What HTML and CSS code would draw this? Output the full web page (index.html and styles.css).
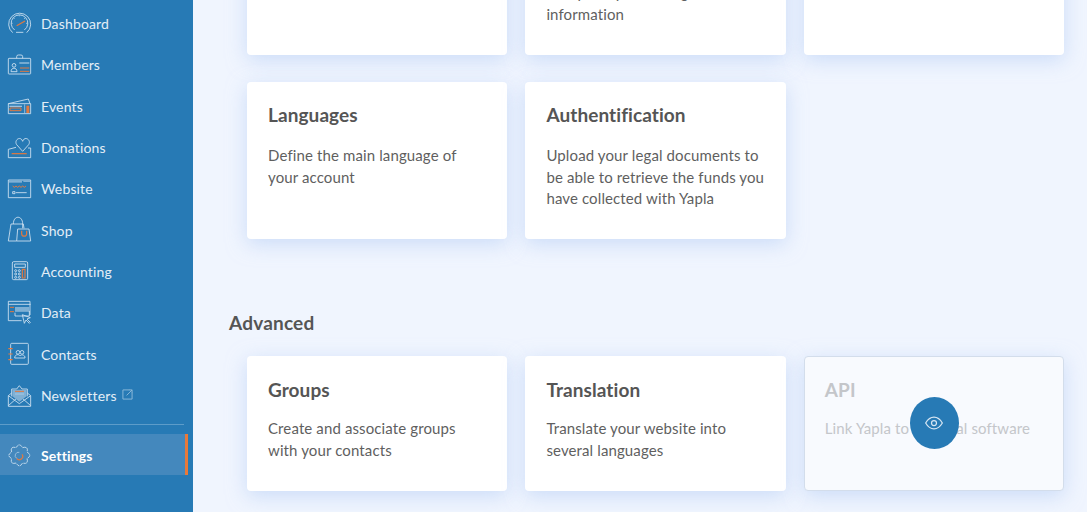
FILE: index.html
```html
<!DOCTYPE html>
<html lang="en">
<head>
<meta charset="utf-8">
<title>Settings</title>
<link rel="stylesheet" href="styles.css">
</head>
<body>
<div class="app">
  <nav class="sidebar">
    <a class="nav-item"><svg class="ico" viewBox="24 38 69 69"><path class="w" d="M38 100A33 33 0 1 1 80 100M44 92A25 25 0 1 1 73 92M48 99H70"/><path class="t" d="M58 46v5M40 55l4 4M76 55l-4 4M33 72h5M83 72h-5"/><path class="o th" d="M50 79L75 65"/></svg><span>Dashboard</span></a>
    <a class="nav-item"><svg class="ico" viewBox="24 160 69 69"><path class="w" d="M27 176H90a2 2 0 0 1 2 2V221a2 2 0 0 1-2 2H27a2 2 0 0 1-2-2V178a2 2 0 0 1 2-2zM50 176v-5q0-5 5-5h8q5 0 5 5v5"/><circle class="w" cx="42" cy="197" r="5.500"/><path class="w" d="M33 216c0-14 18-14 18 0z"/><path class="l" d="M58 190H88"/><path class="o" d="M60 205H88M60 215H88"/></svg><span>Members</span></a>
    <a class="nav-item"><svg class="ico" viewBox="24 284 69 69"><path class="w" d="M25 310H92V340H25zM25 310L85 296L90 310"/><path class="t" d="M74 312V340"/><path class="l" d="M28 318H66"/><path class="o" d="M30 323H63V331H30z"/><path class="fo" d="M79 316H88V338H79z"/></svg><span>Events</span></a>
    <a class="nav-item"><svg class="ico" viewBox="24 410 69 69"><path class="w" d="M68 456L50 436C41 422 62 408 68 426C74 408 95 422 86 436zM48 444L25 450V475H92V446H84"/><path class="o th" d="M35 463H80"/></svg><span>Donations</span></a>
    <a class="nav-item"><svg class="ico" viewBox="24 23 69 69"><path class="w" d="M25 32H92V85H25z"/><path class="fl" d="M27 33H66V40H27z"/><path class="t" d="M70 36H90"/><path class="o" d="M38 50l5 4 5-4 5 4 5-4 5 4 5-4 5 4 5-4"/><path class="w" d="M38 67H45V73H38zM48 70H80"/></svg><span>Website</span></a>
    <a class="nav-item"><svg class="ico" viewBox="24 150 69 69"><path class="w" d="M25 216L33 165H70L72 178M25 216H50M40 165C40 138 68 138 68 165V178M53 180H87L92 216H50z"/><path class="o th" d="M65 185V194C65 204 80 204 80 194V185"/></svg><span>Shop</span></a>
    <a class="nav-item"><svg class="ico" viewBox="24 273 69 69"><rect class="w" x="37" y="278" width="46" height="54" rx="4"/><path class="w" d="M44 285H76V295H44z"/><circle class="w" cx="47" cy="305" r="3"/><circle class="w" cx="58" cy="305" r="3"/><circle class="w" cx="47" cy="315" r="3"/><circle class="w" cx="58" cy="315" r="3"/><circle class="w" cx="47" cy="325" r="3"/><circle class="w" cx="58" cy="325" r="3"/><path class="o th" d="M67 301H75V327H67z"/></svg><span>Accounting</span></a>
    <a class="nav-item"><svg class="ico" viewBox="24 396 69 69"><path class="w" d="M90 438V397H25V455H65M25 406H92M45 426H88V441H45V431"/><path class="fl" d="M45 414H88V426H45z"/><path class="o" d="M30 415H42M30 428H42"/><path class="w" d="M67 437L73 463L78 453L88 463L91 460L81 450L91 446z"/></svg><span>Data</span></a>
    <a class="nav-item"><svg class="ico" viewBox="24 12 69 69"><rect class="w" x="32" y="13" width="53" height="63" rx="3"/><circle class="w" cx="54" cy="40" r="5.500"/><circle class="w" cx="66" cy="40" r="5.500"/><path class="w" d="M44 57c0-12 14-12 16-6c3-6 16-4 15 6z"/><path class="o th" d="M25 29H38M25 45H38M25 62H38"/></svg><span>Contacts</span></a>
    <a class="nav-item"><svg class="ico" viewBox="24 135 69 69"><path class="w" d="M25 170V202H92V170M25 200L50 178M92 200L67 178M25 170L58 194L92 170M25 170L35 162M92 170L82 162"/><path class="w" d="M35 172V150H50L58 140L66 150H82V172"/><path class="fl" d="M37 152H80V172L58 188L37 172z"/><path class="o" d="M45 157H72"/><path class="l" d="M45 165H72"/></svg><span>Newsletters</span><svg class="ext" viewBox="0 0 12 12"><path d="M8 1H1v10h10V4M5 7l6-6M7.500 1H11v3.500"/></svg></a>
    <hr class="sep">
    <a class="nav-item active"><svg class="ico" viewBox="24 315 69 69"><path class="w" stroke-dasharray="11 2" d="M48.400 325.900Q58 309 67.600 325.900Q86.300 320.700 81.100 339.400Q98 349 81.100 358.600Q86.300 377.300 67.600 372.100Q58 389 48.400 372.100Q29.700 377.300 34.900 358.600Q18 349 34.900 339.400Q29.700 320.700 48.400 325.900z"/><path class="o th" d="M66 346A10 10 0 0 1 50 358"/><path class="t" d="M50 358A10 10 0 0 1 58 340"/></svg><span>Settings</span></a>
  </nav>
  <main class="content">
    <section class="grid top">
      <article class="card"></article>
      <article class="card"><p class="cut">Complete your billing</p><p>information</p></article>
      <article class="card"></article>
      <article class="card"><h3>Languages</h3><p>Define the main language of your account</p></article>
      <article class="card"><h3>Authentification</h3><p>Upload your legal documents to be able to retrieve the funds you have collected with Yapla</p></article>
    </section>
    <h2>Advanced</h2>
    <section class="grid">
      <article class="card low"><h3>Groups</h3><p>Create and associate groups with your contacts</p></article>
      <article class="card low"><h3>Translation</h3><p>Translate your website into several languages</p></article>
      <article class="card low off"><h3>API</h3><p>Link Yapla to external software</p>
        <span class="eye"><svg viewBox="0 0 24 24"><path d="M2 12s4-7 10-7 10 7 10 7-4 7-10 7-10-7-10-7z"/><circle cx="12" cy="12" r="3"/></svg></span>
      </article>
    </section>
  </main>
</div>
</body>
</html>
```
FILE: styles.css
```css
* { box-sizing: border-box; }
html, body { margin: 0; height: 100%; overflow: hidden; }
body { font-family: "Lato", "Open Sans", sans-serif; color: #555; background: #f0f5fe; }
.app { display: flex; height: 512px; overflow: hidden; }
.sidebar { width: 193px; flex: none; background: #277ab5; padding-top: 3px; display: flex; flex-direction: column; }
.nav-item { display: flex; align-items: center; height: 41.3px; padding-left: 8px; gap: 10px; color: #e3eef7; font-size: 14px; letter-spacing: .15px; }
.ico { width: 23px; height: 23px; flex: none; fill: none; overflow: visible; }
.ico .w { stroke: #cfe2f1; stroke-width: 2.600; fill: none; }
.ico .t { stroke: #a9cbe4; stroke-width: 2.400; fill: none; }
.ico .l { stroke: #9cc3e0; stroke-width: 4; fill: none; }
.ico .o { stroke: #e2793f; stroke-width: 3; fill: none; }
.ico .th { stroke-width: 3.600; }
.ico .fl { fill: #7fb0d4; }
.ico .fo { fill: #e2793f; }
.ext { width: 11px; height: 11px; margin-left: -5px; margin-top: -2px; fill: none; stroke: #8fbbdb; stroke-width: 1; }
.sep { width: 184px; height: 1px; margin: 8px 0 9px; border: 0; background: #5d9cc9; flex: none; }
.nav-item.active { width: 188px; height: 41px; padding-top: 2px; background: #4488bd; border-right: 3px solid #e8793a; color: #fff; font-weight: 700; }
.content { flex: 1; padding: 0 22px 0 54px; }
.grid { display: grid; grid-template-columns: repeat(3, 260.400px); column-gap: 18px; row-gap: 27px; }
.grid.top { margin-top: -102px; grid-auto-rows: 157px; }
.card { background: #fff; border-radius: 4px; padding: 20px 21px; box-shadow: 0 5px 20px rgba(178, 204, 245, .6); position: relative; }
.card h3 { margin: 0 0 17px; font-size: 19px; line-height: 26px; font-weight: 700; color: #555; letter-spacing: .08px; }
.card p { margin: 0; font-size: 15px; line-height: 21.700px; color: #5f5f5f; letter-spacing: .12px; }
.card .cut { margin-top: 64px; white-space: nowrap; }
h2 { margin: 71px 0 20px -18px; font-size: 19px; line-height: 26px; font-weight: 700; color: #555; letter-spacing: .2px; }
.low { height: 135px; padding-top: 21px; }
.low h3 { margin-bottom: 15px; }
.off { background: #f8fafe; border: 1px solid #d3ddeb; padding: 20px; }
.off h3, .off p { color: #c4c6ca; }
.eye { position: absolute; left: 105px; top: 40px; width: 49px; height: 52px; border-radius: 50%; background: #277ab5; display: flex; align-items: center; justify-content: center; }
.eye svg { width: 20px; height: 20px; fill: none; stroke: #d5e5f2; stroke-width: 1.500; }
```
